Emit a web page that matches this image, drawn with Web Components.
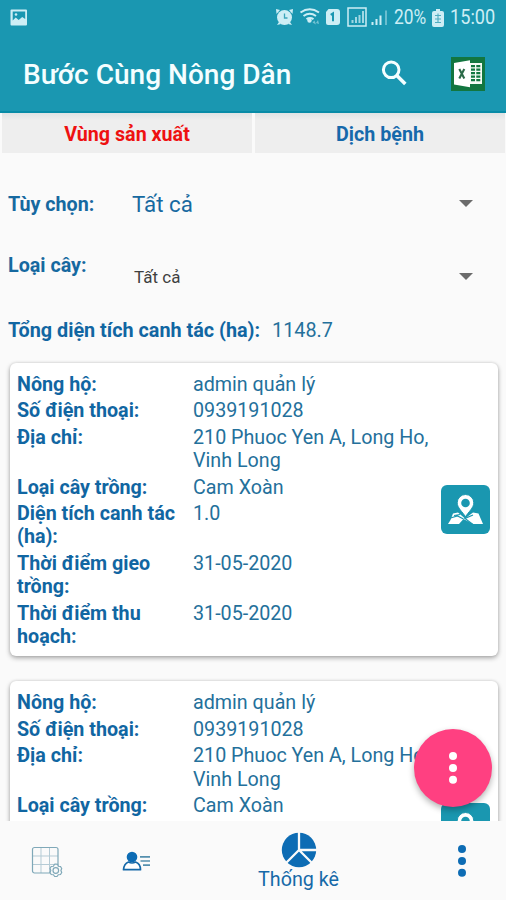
<!DOCTYPE html>
<html lang="vi">
<head>
<meta charset="utf-8">
<title>Bước Cùng Nông Dân</title>
<style>
html,body{margin:0;height:100%;background:#fafafa;font-family:Roboto,"Noto Sans",sans-serif}
</style>
</head>
<body>
<farm-app></farm-app>
<script>
const define = (name, html, setup) => {
  const t = document.createElement('template');
  t.innerHTML = html;
  customElements.define(name, class extends HTMLElement {
    constructor() {
      super();
      this.attachShadow({mode: 'open'}).append(t.content.cloneNode(true));
    }
    connectedCallback() { if (setup) setup(this, this.shadowRoot); }
  });
};

define('status-bar', `
<style>
:host{display:flex;align-items:center;height:36px;padding:0 10px 0 10px;box-sizing:border-box;color:#cdeef5}
svg{display:block;flex:none}
.l{margin-right:auto}
.t{font-size:19.5px;line-height:36px;white-space:nowrap;transform-origin:0 50%}
.pct{width:33px;margin-left:3px}.pct span,.clk span{display:inline-block;transform-origin:0 50%}
.pct span{transform:scaleX(.89)}
.clk{width:46px;margin-left:6px}.clk span{transform:scaleX(.93)}
</style>
<svg class="l" width="18" height="18" viewBox="0 0 18 18"><path fill="#cdeef5" fill-rule="evenodd" d="M1.500 .5h14.500a1 1 0 0 1 1 1v14a1 1 0 0 1-1 1h-14.500a1 1 0 0 1-1-1v-14a1 1 0 0 1 1-1zM2.700 2.500v9l3-3 3 2.500 3.500-3 3 2V2.500z"/><circle cx="6" cy="5.500" r="1.300" fill="#cdeef5"/></svg>
<svg width="116" height="22" viewBox="274 7 116 22">
<g fill="#cdeef5">
<circle cx="283.500" cy="17.500" r="7.500"/>
<path d="M275 9l4 1-3.500 4zM292 9l-4 1 3.500 4zM276 25l2-3 2 2zM291 25l-2-3-2 2z"/>
<path d="M327.500 9h8.500a3 3 0 0 1 3 3v10a3 3 0 0 1-3 3h-9a2 2 0 0 1-2-2V12z"/>
<path d="M350.500 23v-3h2v3zM354 23v-6h2v6zM357.500 23v-8h2v8zM361 23V11h2v12z" opacity=".75"/>
<path d="M370.500 25v-3h2v3zM374.500 25v-6h2v6zM378.500 25V15.500h2V25z"/><path d="M384 25V10.500h2V25z" opacity=".45"/>
<circle cx="308.500" cy="20.500" r="2.200"/>
<path d="M311.500 22.500l2-2 1.500 4zM315 23l2-3 1 4z" opacity=".5"/>
</g>
<path d="M283.500 13.500v4.500h3" fill="none" stroke="#3ba5ba" stroke-width="1.300"/>
<g fill="none" stroke="#cdeef5" stroke-width="2"><path d="M299.500 12.500q9.200-6.500 18.500 0M302.500 16q6.300-4.500 12.500 0M305.500 19.200q3.500-2.300 7 0"/></g>
<path d="M329.700 14.800l2.300-1.500v8" fill="none" stroke="#1a97b1" stroke-width="2"/>
<rect x="347" y="8" width="18" height="18" fill="none" stroke="#cdeef5" stroke-width="1.500"/>
</svg>
<div class="t pct"><span>20%</span></div>
<svg width="12" height="18" viewBox="0 0 12 18" style="margin-left:5px"><path fill="#cdeef5" fill-rule="evenodd" d="M4 0h4v2h2a2 2 0 0 1 2 2v12a2 2 0 0 1-2 2H2a2 2 0 0 1-2-2V4a2 2 0 0 1 2-2h2z"/><path d="M3 6.500h6M6 4.500v9M3 10h6M3 13.500h6" stroke="#4fadc0" stroke-width="1.100"/></svg>
<div class="t clk"><span>15:00</span></div>
`);

define('app-header', `
<style>
:host{display:block;height:113px;box-sizing:border-box;background:#1a97b1;border-bottom:2px solid #078ba7}
.bar{display:flex;align-items:center;height:77px;padding:0 21px 0 23px}
h1{margin:0 auto 0 0;font-size:28px;line-height:32px;font-weight:500;color:#f4feff;white-space:nowrap;letter-spacing:.02px}
svg{display:block}
.s{margin:-3px 44px 0 0}
</style>
<status-bar></status-bar>
<div class="bar"><h1><slot></slot></h1>
<svg class="s" width="26" height="26" viewBox="0 0 26 26"><circle cx="10.200" cy="9.800" r="7.800" fill="none" stroke="#f4feff" stroke-width="3"/><path d="M15.800 15.400L24.300 24" stroke="#f4feff" stroke-width="3.500"/></svg>
<svg width="34" height="34" viewBox="0 0 34 34" style="margin-top:-2px"><rect width="34" height="34" fill="#127640"/><rect x="17" y="6" width="14" height="21" fill="#f5fbf5"/><path fill="#127640" d="M20 8h4v2.300h-4zM25.300 8h4v2.300h-4zM20 11.500h4v2.300h-4zM25.300 11.500h4v2.300h-4zM20 15h4v2.300h-4zM25.300 15h4v2.300h-4zM20 18.500h4v2.300h-4zM25.300 18.500h4v2.300h-4zM20 22h4v2.300h-4zM25.300 22h4v2.300h-4z"/><path d="M3 6L19 3.300v27L3 27.500z" fill="#fff"/><path d="M8.300 12l5 9.500M13.300 12l-5 9.500" stroke="#2b6a48" stroke-width="2.100"/></svg>
</div>
`);

define('tab-item', `
<style>
:host{display:block;flex:1;height:40px;box-sizing:border-box;background:linear-gradient(#dfe3e4,#eeeeee 7px);text-align:center;font-size:19.700px;line-height:43px;font-weight:700;color:#1669ab;white-space:nowrap}
:host([active]){color:#ee1111}
</style><slot></slot>`);

define('drop-row', `
<style>
:host{display:flex;box-sizing:border-box;padding:0 33px 0 8px;color:#1669a0}
.k{width:124px;font-weight:700;font-size:19.700px;line-height:24px;white-space:nowrap}
.v{flex:1}
i{width:0;height:0;border:7px solid transparent;border-top:7px solid #6b6b6b;border-bottom:0}
</style>
<div class="k"><slot name="label"></slot></div><div class="v"><slot></slot></div><i part="arrow"></i>`);

define('map-button', `
<style>:host{display:block;width:49px;height:49px;border-radius:6px;background:#1a97b0}svg{display:block}</style>
<svg width="49" height="49" viewBox="0 0 49 49"><path fill="#fff" d="M12 28.500l5-1 7 6 8-6 5.500 1 4.500 10.500H32L22.500 34 18 39H7l2.500-4z"/><path d="M9.500 33l7-2 6 3M32 30l-8 3.500 8 6M13 30.500l6-1" stroke="#1a97b0" stroke-width="1.200" fill="none"/><path fill="#fff" stroke="#1a97b0" stroke-width="1" d="M24.500 9.500a8.300 8.300 0 0 1 8.300 8.300c0 5-5.300 9-8.300 14-3-5-8.300-9-8.300-14A8.300 8.300 0 0 1 24.500 9.500z"/><circle cx="24.500" cy="18" r="4.300" fill="#1a97b0"/></svg>`);

define('info-row', `
<style>
:host{display:grid;grid-template-columns:176px 1fr;font-size:19.700px;line-height:23.100px;color:#24709b;white-space:pre-line}
b{color:#1166a2;font-weight:700}
</style><b></b><span></span>`, (el, r) => {
  r.querySelector('b').textContent = el.getAttribute('label');
  r.querySelector('span').textContent = el.getAttribute('value');
});

define('farm-card', `
<style>
:host{display:flex;align-items:center;box-sizing:border-box;width:488px;height:293.500px;margin-left:9.500px;padding:0 7.500px;background:#fff;border-radius:6px;box-shadow:0 2px 5px rgba(0,0,0,.32),0 0 3px rgba(0,0,0,.12);flex:none}
.rows{flex:1;min-width:0;height:276px;margin-top:3px;display:flex;flex-direction:column;gap:3.500px}
map-button{flex:none}
</style>
<div class="rows"><slot></slot></div><map-button></map-button>`);

define('fab-button', `
<style>:host{display:flex;align-items:center;justify-content:center;width:78px;height:78px;border-radius:50%;background:#ff4081;box-shadow:0 3px 6px rgba(0,0,0,.3)}</style>
<svg width="10" height="34" viewBox="0 0 10 34" fill="#fff"><circle cx="5" cy="5" r="4"/><circle cx="5" cy="17" r="4"/><circle cx="5" cy="28.700" r="4"/></svg>`);

define('bottom-nav', `
<style>
:host{display:grid;grid-template-columns:92px 91px 231px 92px;height:79px;background:#fafafa;color:#1669a8;position:relative}
div{display:flex;flex-direction:column;align-items:center;justify-content:center}
svg{display:block}
.c{justify-content:flex-start;padding-top:11px}
.c span{font-size:19.700px;line-height:24px;margin-top:0;white-space:nowrap}
</style>
<div><svg width="32" height="32" viewBox="0 0 32 32" fill="none" style="margin-left:2px;margin-top:3px"><g stroke="#b5cbd5" stroke-width="1"><path d="M10 2v25M18.500 2v25M2 10h25M2 18.500h25"/></g><rect x="1.500" y="1.500" width="25.500" height="25.500" rx="2" stroke="#7fa8b8" stroke-width="1.200"/><path d="M24.500 18l2 .3.800 2 2.200.2 1.200 2-.8 2 .8 2-1.200 2-2.200.2-1.300 1.800h-2.300l-1.300-1.800-2.200-.2-1.200-2 .8-2-.8-2 1.200-2 2.200-.2 1.100-2z" fill="#fafafa" stroke="#7fa8b8" stroke-width="1.200"/><circle cx="24.800" cy="24.500" r="2.800" stroke="#7fa8b8" stroke-width="1.200"/></svg></div>
<div><svg width="29" height="21" viewBox="0 0 29 21" style="margin-left:-3px;margin-top:1px"><circle cx="10" cy="6" r="5.300" fill="#0d6cb4"/><path d="M1.500 18.700q.5-6 5-7.700 3.500 2 7 0 5 1.700 5 7.700z" fill="#fff" stroke="#1669a8" stroke-width="1.700" stroke-linejoin="round"/><path d="M18 5.800h10M18.500 10h9.500M21 14.200h7" stroke="#5590ae" stroke-width="1.700"/></svg></div>
<div class="c"><svg width="36" height="36" viewBox="0 0 36 36"><circle cx="18" cy="18" r="17.200" fill="#0d6cb4"/><path d="M18 0v18h18M18 18L5 31M18 18l13 13" fill="none" stroke="#fafafa" stroke-width="2.300"/></svg><span>Thống kê</span></div>
<div><svg width="10" height="34" viewBox="0 0 10 34" fill="#0d6cb4" style="margin-left:4px"><circle cx="5" cy="5" r="4"/><circle cx="5" cy="17" r="4"/><circle cx="5" cy="28.700" r="4"/></svg></div>`);

define('farm-app', `
<style>
:host{display:flex;flex-direction:column;width:506px;height:900px;overflow:hidden;position:relative;background:#fafafa}
.tabs{display:flex;gap:3px;padding:0 1px 0 2px;flex:none}
main{flex:1;overflow:hidden;display:flex;flex-direction:column;min-height:0}
drop-row,.sum,.list{flex:none}
.d1{margin-top:40px;height:44px}.d1 .big{font-size:22.300px;line-height:22px;display:block}
.d1::part(arrow){margin-top:7px}
.d2{margin-top:17px;height:48px}.d2 .sm{font-size:17px;line-height:24px;display:block;padding:11px 0 0 2px;color:#3f3f3f}
.d2::part(arrow){margin-top:19px}
.sum{display:flex;gap:12px;padding-left:8px;font-size:19.800px;line-height:24px;color:#24709b;margin-top:17px;margin-bottom:19.500px;white-space:nowrap}
.sum b{color:#1166a2}
.list{display:flex;flex-direction:column;gap:25px}
fab-button{position:absolute;left:414px;top:729px}
</style>
<app-header>Bước Cùng Nông Dân</app-header>
<div class="tabs"><tab-item active>Vùng sản xuất</tab-item><tab-item>Dịch bệnh</tab-item></div>
<main>
<drop-row class="d1"><span slot="label">Tùy chọn:</span><span class="big">Tất cả</span></drop-row>
<drop-row class="d2"><span slot="label">Loại cây:</span><span class="sm">Tất cả</span></drop-row>
<div class="sum"><b>Tổng diện tích canh tác (ha):</b><span>1148.7</span></div>
<div class="list">
<farm-card>
<info-row label="Nông hộ:" value="admin quản lý"></info-row>
<info-row label="Số điện thoại:" value="0939191028"></info-row>
<info-row label="Địa chỉ:" value="210 Phuoc Yen A, Long Ho,&#10;Vinh Long"></info-row>
<info-row label="Loại cây trồng:" value="Cam Xoàn"></info-row>
<info-row label="Diện tích canh tác&#10;(ha):" value="1.0"></info-row>
<info-row label="Thời điểm gieo&#10;trồng:" value="31-05-2020"></info-row>
<info-row label="Thời điểm thu&#10;hoạch:" value="31-05-2020"></info-row>
</farm-card>
<farm-card>
<info-row label="Nông hộ:" value="admin quản lý"></info-row>
<info-row label="Số điện thoại:" value="0939191028"></info-row>
<info-row label="Địa chỉ:" value="210 Phuoc Yen A, Long Ho,&#10;Vinh Long"></info-row>
<info-row label="Loại cây trồng:" value="Cam Xoàn"></info-row>
</farm-card>
</div>
</main>
<bottom-nav></bottom-nav>
<fab-button></fab-button>`);
</script>
</body>
</html>
